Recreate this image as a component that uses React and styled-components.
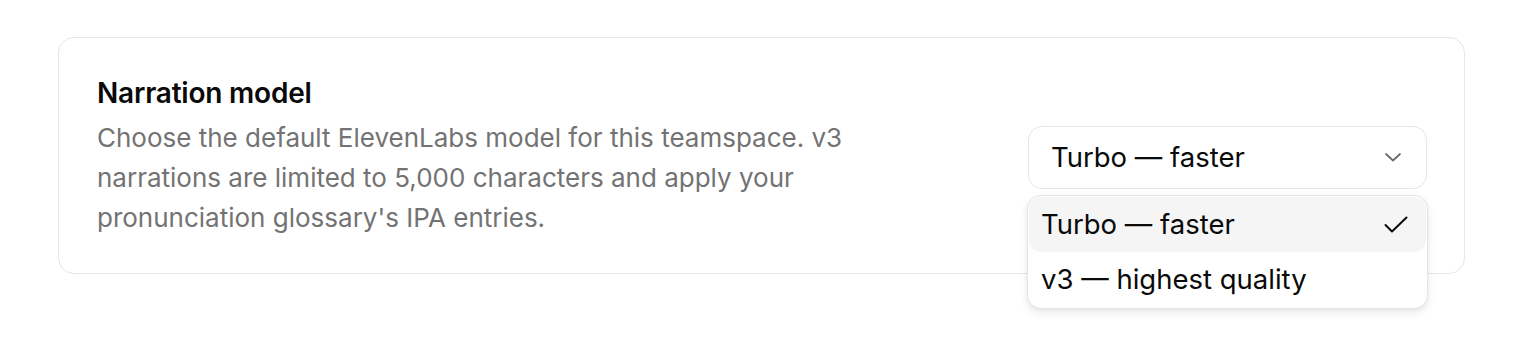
import React, { useState } from 'react';
import styled, { createGlobalStyle } from 'styled-components';

const GlobalStyle = createGlobalStyle`
  html, body {
    margin: 0;
    padding: 0;
    background: #ffffff;
    font-family: Inter, "Noto Sans", "Liberation Sans", sans-serif;
    -webkit-font-smoothing: antialiased;
  }
`;

const models = [
  { id: 'turbo', label: 'Turbo — faster' },
  { id: 'v3', label: 'v3 — highest quality' },
];

const Page = styled.div`
  box-sizing: border-box;
  min-height: 356px;
  padding: 37px 69px 0 58px;
`;

const Card = styled.section`
  border: 1.5px solid #e6e6e6;
  border-radius: 16px;
  padding: 38px 37px 35px 38px;
  display: flex;
  align-items: center;
  justify-content: space-between;
  gap: 40px;
`;

const Info = styled.div`
  display: flex;
  flex-direction: column;
  gap: 7px;
  max-width: 790px;
`;

const Title = styled.h3`
  margin: 0;
  font-size: 28px;
  line-height: 35px;
  font-weight: 600;
  color: #0a0a0a;
  letter-spacing: -0.2px;
`;

const Description = styled.p`
  margin: 0;
  font-size: 26px;
  line-height: 40px;
  color: #737373;
`;

const SelectWrap = styled.div`
  position: relative;
  width: 399px;
  flex-shrink: 0;
`;

const Trigger = styled.button`
  box-sizing: border-box;
  width: 100%;
  height: 63px;
  display: flex;
  align-items: center;
  justify-content: space-between;
  padding: 0 24px 0 22px;
  background: #ffffff;
  border: 1.5px solid #e6e6e6;
  border-radius: 14px;
  font-family: inherit;
  font-size: 27.5px;
  color: #0a0a0a;
  cursor: pointer;
`;

const Menu = styled.div`
  position: absolute;
  top: 69px;
  left: -1px;
  right: -1px;
  padding: 1px;
  background: #ffffff;
  border: 1px solid #e6e6e6;
  border-radius: 14px;
  box-shadow: 0 4px 10px rgba(0, 0, 0, 0.08), 0 1px 3px rgba(0, 0, 0, 0.05);
  z-index: 10;
`;

const Option = styled.div`
  height: 55px;
  display: flex;
  align-items: center;
  justify-content: space-between;
  padding: 0 18px 0 12px;
  border-radius: 12px;
  font-size: 27.5px;
  color: #0a0a0a;
  background: ${(p) => (p.$active ? '#f5f5f5' : 'transparent')};
  cursor: pointer;
`;

const Chevron = () => (
  <svg width="18" height="10" viewBox="0 0 18 10" fill="none" stroke="#6b6b6b" strokeWidth="1.8" strokeLinecap="round" strokeLinejoin="round">
    <path d="M2 2l7 6.5L16 2" />
  </svg>
);

const Check = () => (
  <svg width="24" height="17" viewBox="0 0 24 17" fill="none" stroke="#0a0a0a" strokeWidth="2" strokeLinecap="round" strokeLinejoin="round">
    <path d="M1.5 9l6.5 6.5L22.5 1.5" />
  </svg>
);

export default function App() {
  const [model, setModel] = useState('turbo');
  const current = models.find((m) => m.id === model);

  return (
    <Page>
      <GlobalStyle />
      <Card>
        <Info>
          <Title>Narration model</Title>
          <Description>
            Choose the default ElevenLabs model for this teamspace. v3 narrations are limited to 5,000 characters and apply your pronunciation glossary's IPA entries.
          </Description>
        </Info>
        <SelectWrap>
          <Trigger>
            <span>{current.label}</span>
            <Chevron />
          </Trigger>
          <Menu>
            {models.map((m) => (
              <Option key={m.id} $active={m.id === model} onClick={() => setModel(m.id)}>
                <span>{m.label}</span>
                {m.id === model && <Check />}
              </Option>
            ))}
          </Menu>
        </SelectWrap>
      </Card>
    </Page>
  );
}
